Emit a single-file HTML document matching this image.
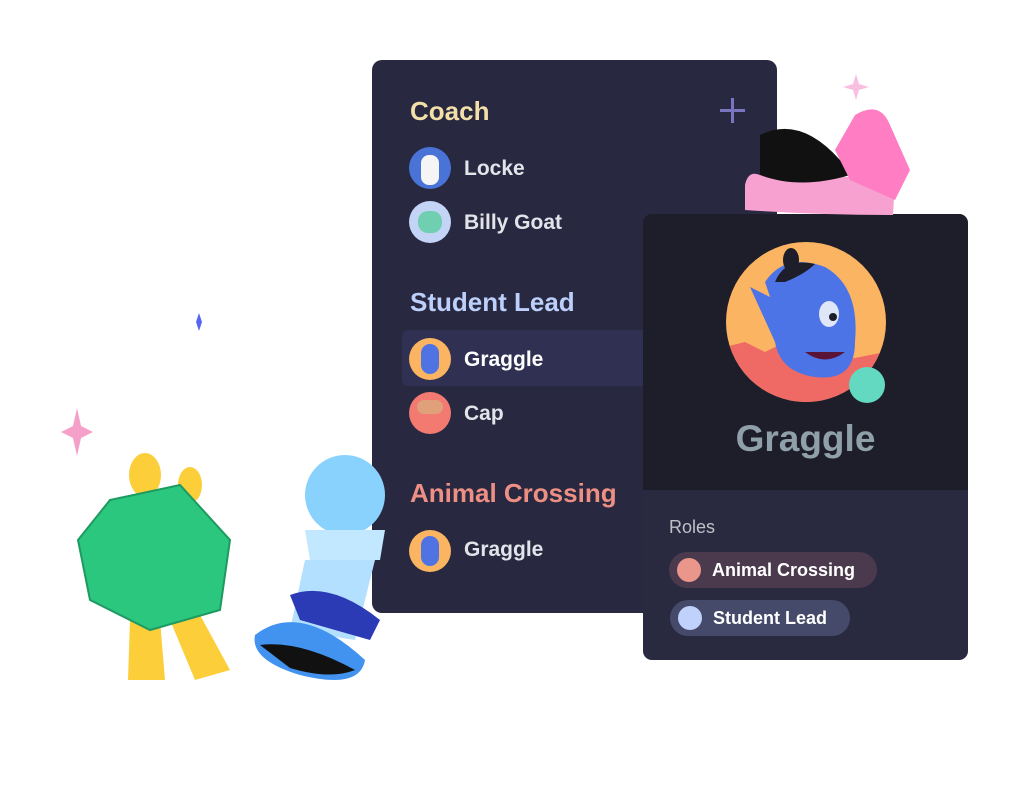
<!DOCTYPE html>
<html><head><meta charset="utf-8"><style>
body{margin:0;width:1028px;height:786px;background:#fff;position:relative;overflow:hidden;font-family:"Liberation Sans",sans-serif;font-weight:bold}
.a{position:absolute}
.panel{left:372px;top:60px;width:405px;height:553px;background:#282840;border-radius:10px}
.h{font-size:26px;left:410px}
.n{font-size:21px;color:#e3e3ea;left:464px}
.av{width:42px;height:42px;border-radius:50%;left:409px}
.card{left:643px;top:214px;width:325px;height:446px;border-radius:9px;background:#292a40;overflow:hidden}
.pill{height:36px;border-radius:18px;font-size:18px;color:#fff;line-height:36px;padding-left:43px;box-sizing:border-box}
.pill i{position:absolute;left:8px;top:6px;width:24px;height:24px;border-radius:50%}
</style></head><body>
<div class="a panel"></div>
<div class="a h" style="top:96px;color:#f3dfa8">Coach</div>
<div class="a" style="left:720px;top:109px;width:25px;height:3px;background:#7a75c0"></div>
<div class="a" style="left:731px;top:98px;width:3px;height:25px;background:#7a75c0"></div>
<div class="a av" style="top:147px;background:#4a73d8"><div class="a" style="left:12px;top:8px;width:18px;height:30px;background:#f5f5f5;border-radius:8px"></div></div>
<div class="a n" style="top:157px">Locke</div>
<div class="a av" style="top:201px;background:#c4d4f7"><div class="a" style="left:9px;top:10px;width:24px;height:22px;background:#6fcfb0;border-radius:10px"></div></div>
<div class="a n" style="top:211px">Billy Goat</div>
<div class="a h" style="top:287px;color:#bcd0fb">Student Lead</div>
<div class="a" style="left:402px;top:330px;width:241px;height:56px;background:#303052;border-radius:6px 0 0 6px"></div>
<div class="a av" style="top:338px;background:#fbb462"><div class="a" style="left:12px;top:6px;width:18px;height:30px;background:#4f73e3;border-radius:9px"></div></div>
<div class="a n" style="top:348px;color:#fff">Graggle</div>
<div class="a av" style="top:392px;background:#f27a70"><div class="a" style="left:8px;top:8px;width:26px;height:14px;background:#e0a07a;border-radius:8px"></div></div>
<div class="a n" style="top:402px">Cap</div>
<div class="a h" style="top:478px;color:#ee8f84">Animal Crossing</div>
<div class="a av" style="top:530px;background:#fbb462"><div class="a" style="left:12px;top:6px;width:18px;height:30px;background:#4f73e3;border-radius:9px"></div></div>
<div class="a n" style="top:538px">Graggle</div>

<div class="a card">
<div class="a" style="left:0;top:0;width:325px;height:276px;background:#1e1e2a"></div>
<svg class="a" style="left:82px;top:28px" width="170" height="170" viewBox="0 0 170 170">
<defs><clipPath id="c"><circle cx="81" cy="80" r="80"/></clipPath></defs>
<circle cx="81" cy="80" r="80" fill="#fbb462"/>
<g clip-path="url(#c)">
<path d="M0 105 L20 100 L40 110 L60 100 L110 120 L160 110 L160 170 L0 170Z" fill="#ef6a65"/>
<path d="M40 40 Q60 10 100 25 Q135 45 130 100 Q130 140 90 135 Q55 130 50 100 L25 45 L45 55Z" fill="#4d74e6"/>
<path d="M50 40 Q60 15 90 22 Q80 32 60 40Z" fill="#1e1e2a"/>
<ellipse cx="104" cy="72" rx="10" ry="13" fill="#dfe6f8"/><circle cx="108" cy="75" r="4" fill="#1e1e2a"/>
<path d="M80 110 Q100 125 120 110 Z" fill="#5a1438"/>
</g>
<ellipse cx="66" cy="18" rx="8" ry="12" fill="#1e1e2a"/>
<circle cx="142" cy="143" r="18" fill="#62d9c0"/>
</svg>
<div class="a" style="left:0;width:325px;text-align:center;top:204px;font-size:37px;color:#8fa0aa">Graggle</div>
<div class="a" style="left:26px;top:303px;font-size:18px;color:#c0c0c8;font-weight:normal">Roles</div>
<div class="a pill" style="left:26px;top:338px;width:208px;background:#4b3a4e"><i style="background:#ea968a"></i>Animal Crossing</div>
<div class="a pill" style="left:27px;top:386px;width:180px;background:#464a6a"><i style="background:#c0d2fb"></i>Student Lead</div>
</div>

<svg class="a" style="left:0;top:0" width="1028" height="786" viewBox="0 0 1028 786">
<path d="M745 185 Q748 170 760 175 L895 178 L893 215 Q820 215 745 210Z" fill="#f7a1d0"/>
<path d="M760 135 Q800 115 840 160 L850 175 Q800 190 760 175Z" fill="#111"/>
<path d="M835 150 L855 115 Q880 100 890 125 L910 170 L895 200 L850 180Z" fill="#ff7dc3"/>
<path d="M853 84 l3 -10 l3 10 l10 3 l-10 3 l-3 10 l-3 -10 l-10 -3z" fill="#f8bfe0"/>
<path d="M196 322 l3 -9 l3 9 l-3 9z" fill="#5865f2"/>
<path d="M77 408 l4 18 l12 6 l-12 6 l-4 18 l-4 -18 l-12 -6 l12 -6z" fill="#f5a0c8"/>
<ellipse cx="145" cy="475" rx="16" ry="22" fill="#fbce3a"/>
<ellipse cx="190" cy="485" rx="12" ry="18" fill="#fbce3a"/>
<path d="M130 620 L160 620 L165 680 L128 680Z" fill="#fbce3a"/>
<path d="M170 620 L200 615 L230 670 L195 680Z" fill="#fbce3a"/>
<path d="M110 500 L180 485 L230 540 L220 610 L150 630 L90 600 L78 540Z" fill="#2bc77f" stroke="#1e9a60" stroke-width="2"/>
<circle cx="345" cy="495" r="40" fill="#8ad2fe"/>
<path d="M305 530 L385 530 L380 560 L310 560Z" fill="#c2e8ff"/>
<path d="M305 560 L375 560 L355 640 L290 630Z" fill="#b3e0ff"/>
<path d="M290 595 Q330 580 380 620 L370 640 L300 620Z" fill="#2b3bb5"/>
<path d="M255 635 Q300 600 365 660 Q360 690 300 675 Q250 660 255 635Z" fill="#4193ef"/>
<path d="M260 645 Q300 640 355 670 Q330 680 290 668Z" fill="#111"/>
</svg>
</body></html>
